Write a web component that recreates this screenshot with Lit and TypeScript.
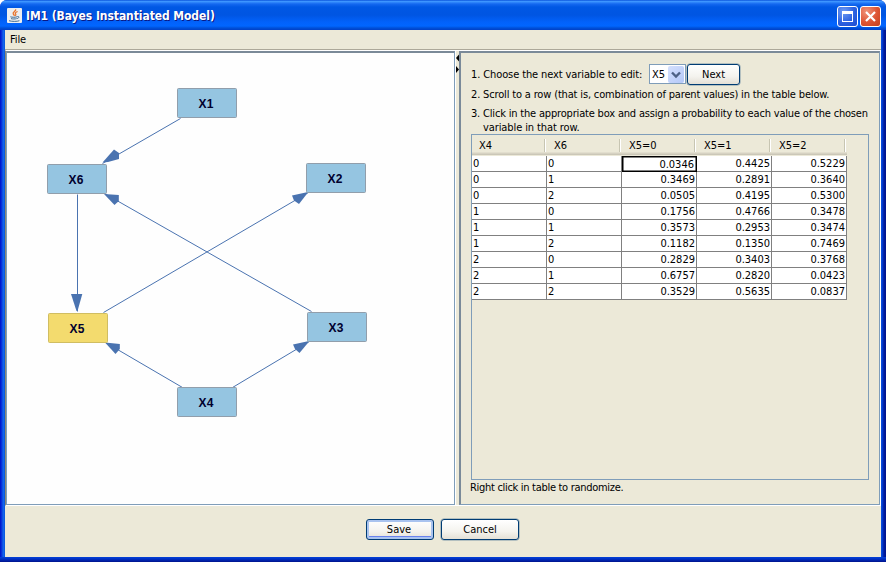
import { LitElement, html, svg, css } from "lit";
import { customElement } from "lit/decorators.js";
import { classMap } from "lit/directives/class-map.js";

const NODES = [
  { id: "X1", x: 177, y: 88 },
  { id: "X2", x: 306, y: 163 },
  { id: "X3", x: 307, y: 312 },
  { id: "X4", x: 177, y: 387 },
  { id: "X5", x: 48, y: 313, selected: true },
  { id: "X6", x: 47, y: 164 },
];

// Each edge: line start, line end, and arrow head triangle.
const EDGES = [
  { line: [180, 118, 102, 163], head: "102.5,162.5 114,149.5 119,153 119,159 108,162" },
  { line: [77, 194, 77, 311], head: "71,294 82.3,294 77.5,311 76.5,311" },
  { line: [103, 312, 308, 192], head: "308,192 292,195.5 294,200.5 299,204 306,195" },
  { line: [311, 311, 104, 193], head: "104,194 118.8,195 118.8,201 114.5,205" },
  { line: [182, 387, 105, 342], head: "105,342.5 119.8,344 119.8,349 115.5,354" },
  { line: [232, 387, 309, 341], head: "309,341 293,344.5 295,349 299.5,353 307,344" },
];

const COLUMNS = ["X4", "X6", "X5=0", "X5=1", "X5=2"];
const ROWS = [
  ["0", "0", "0.0346", "0.4425", "0.5229"],
  ["0", "1", "0.3469", "0.2891", "0.3640"],
  ["0", "2", "0.0505", "0.4195", "0.5300"],
  ["1", "0", "0.1756", "0.4766", "0.3478"],
  ["1", "1", "0.3573", "0.2953", "0.3474"],
  ["1", "2", "0.1182", "0.1350", "0.7469"],
  ["2", "0", "0.2829", "0.3403", "0.3768"],
  ["2", "1", "0.6757", "0.2820", "0.0423"],
  ["2", "2", "0.3529", "0.5635", "0.0837"],
];

@customElement("model-graph")
export class ModelGraph extends LitElement {
  static styles = css`
    :host { display: block; width: 447px; height: 451px; }
    svg { display: block; }
    .edge { stroke: #4a73b0; stroke-width: 1; }
    .head { fill: #4a73b0; }
    .node { fill: #95c5e1; stroke: #919eab; }
    .node.selected { fill: #f3db6e; stroke: #d0bd62; }
    .label { font: bold 12px "Liberation Sans", sans-serif; fill: #00002e; text-anchor: middle; }
  `;
  render() {
    return html`<svg width="447" height="451" viewBox="7 53 447 451">
      ${EDGES.map(
        ({ line: [x1, y1, x2, y2], head }) => svg`
          <line class="edge" x1=${x1 + 0.5} y1=${y1 + 0.5} x2=${x2 + 0.5} y2=${y2 + 0.5}></line>
          <polygon class="head" points=${head}></polygon>`
      )}
      ${NODES.map(
        (n) => svg`
          <rect class=${classMap({ node: true, selected: !!n.selected })}
            x=${n.x + 0.5} y=${n.y + 0.5} width="59" height="29" rx="1"></rect>
          <text class="label" x=${n.x + 29} y=${n.y + 20} textLength="15">${n.id}</text>`
      )}
    </svg>`;
  }
}

@customElement("probability-table")
export class ProbabilityTable extends LitElement {
  static styles = css`
    :host { display: block; box-sizing: border-box; width: 398px; height: 346px; border: 1px solid #7f9db9; }
    .head, .row { display: grid; grid-template-columns: repeat(5, 75px); width: 375px; }
    .th { height: 21px; box-sizing: border-box; padding-left: 7px; line-height: 22px; position: relative;
      background: linear-gradient(#ece9d8 0 17px, #e2dece 17px 18px, #d6d2c2 18px 19px, #cbc7b8 19px 20px, #ece9d8 20px); }
    .th::after { content: ""; position: absolute; right: 1px; top: 4px; width: 1px; height: 13px;
      background: #c7c5b2; border-right: 1px solid #fff; }
    .td { box-sizing: border-box; height: 16px; background: #fff; border-right: 1px solid #808080;
      border-bottom: 1px solid #808080; line-height: 15px; padding: 0 1px; }
    .num { text-align: right; }
    .focus { border: 1px solid #000; box-shadow: inset 0 0 0 .5px #000; line-height: 15px; padding-right: 2px; }
  `;
  render() {
    return html`
      <div class="head">${COLUMNS.map((c) => html`<div class="th">${c}</div>`)}</div>
      ${ROWS.map(
        (row, r) => html`<div class="row">
          ${row.map((v, c) => html`<div class=${classMap({ td: true, num: c > 1, focus: r === 0 && c === 2 })}>${v}</div>`)}
        </div>`
      )}`;
  }
}

@customElement("app-root")
export class AppRoot extends LitElement {
  static styles = css`
    :host { display: block; width: 886px; height: 562px; overflow: hidden; background: #fff;
      font: 11px "DejaVu Sans Condensed", "DejaVu Sans", sans-serif; font-stretch: condensed; color: #000; }
    * { box-sizing: border-box; }
    .window { width: 886px; height: 562px; display: flex; flex-direction: column; padding: 0 5px 5px;
      border-radius: 7px 7px 0 0; overflow: hidden;
      background: linear-gradient(transparent 557px, #0441d8 557px, #0030c4 559px, #00138c 562px),
        linear-gradient(90deg, #0019cf 0 1px, #0831d9 1px 2px, #166aee 3px, #0855dd 5px, #0855dd 881px, #0441d8 882px, #001da0 884px, #00138c 886px); }
    .title { height: 30px; margin: 0 -5px; padding: 1px 5px 0 7px; display: flex; align-items: center; flex: none;
      background: linear-gradient(#0a54dc 0, #3d95ff 1.5px, #1468f0 4px, #0058e4 7px, #0055e2 15px, #0262fb 22px, #0166ff 26px, #0050d8 28px, #0040c8 30px); }
    .title-text { margin-left: 4px; color: #fff; font-weight: bold; font-size: 12px; letter-spacing: -.07px;
      text-shadow: 1px 1px 0 #0a1883; white-space: nowrap; flex: 1; }
    .win-btn { width: 21px; height: 21px; border: 1px solid #fff; border-radius: 3px; margin: 1px 0 0 2px; display: block;
      background: radial-gradient(circle at 30% 25%, #6f9cf4, #2c61e0 55%, #1c4cd0); }
    .win-btn.close { background: radial-gradient(circle at 30% 25%, #f0937a, #dd5433 55%, #c4401c); }
    .body { flex: 1; background: #ece9d8; display: flex; flex-direction: column; }
    .menu { height: 20px; border-bottom: 1px solid #aca899; padding-left: 5px; line-height: 19px; flex: none; letter-spacing: -.1px; }
    .split { display: flex; height: 456px; border-top: 1px solid #fff; border-bottom: 1px solid #fff;
      border-left: 1px solid #8a8776; border-right: 1px solid #fff; flex: none; }
    .pane-left { width: 449px; height: 454px; border: 1px solid #7f9db9; border-top: 2px solid #7b8a98; background: #fefefe; }
    .divider { width: 4px; height: 454px; border-left: 1px solid #fff; }
    .divider svg { display: block; }
    .pane-right { width: 421px; height: 454px; border: 1px solid #7f9db9; border-left: 2px solid #7a8a99; border-top: 2px solid #7b8a98; padding: 11px 9px 0 10px; }
    .choose { display: flex; align-items: center; height: 22px; }
    .line { white-space: nowrap; line-height: 14px; }
    .step1 { width: 178px; letter-spacing: -.11px; }
    .step2 { margin-top: 1px; line-height: 16px; letter-spacing: -.16px; }
    .step3 { margin-top: 4px; line-height: 14px; letter-spacing: -.18px; }
    .indent { padding-left: 12px; line-height: 13px; letter-spacing: -.1px; }
    .combo { width: 37px; height: 20px; margin-top: -2px; border: 1px solid #7f9db9; background: #fff; display: flex; align-items: center; padding-left: 2px; justify-content: space-between; }
    .drop { width: 16px; height: 17px; margin-right: 1px; background: linear-gradient(135deg, #d4e0fd, #b4c8f8); border-radius: 2px; }
    .drop svg { display: block; }
    .btn { height: 21px; border: 1px solid #003c74; border-radius: 3px; background: linear-gradient(#fff, #f4f3ee 60%, #e4e0d6);
      display: flex; align-items: center; justify-content: center; line-height: 13px; box-shadow: 0 0 0 .5px #7d97a8; }
    .next { width: 53px; margin: -1px 0 0 1px; }
    .save { width: 68px; padding-right: 2px; box-shadow: inset 0 0 0 2px #a9c3ef, inset 0 -2px 0 1px #6982ee; }
    .cancel { width: 78px; }
    .actions { display: flex; gap: 7px; padding: 13px 0 0 361px; }
    .hint { margin: 1px 0 0 -1px; letter-spacing: -.3px; }
  `;
  render() {
    return html`<div class="window">
      <div class="title">
        <svg width="15" height="15" viewBox="0 0 15 15">
          <rect width="15" height="15" rx="1" fill="#eceef0"></rect>
          <path d="M8.6 1.2c1 1.8-3.2 2.8-2.4 4.6.3.7 1 1 1.2 2M10.6 3.5C8.4 4.4 7.8 5.2 8.7 6.1c.5.7.1 1.2-.5 1.8" fill="none" stroke="#e8742c" stroke-width="1.3"></path>
          <path d="M3.4 8.8c1.4.6 5.4.6 6.6 0M4 10.6c1.4.5 4.4.5 5.6 0M10.3 8.5c2.4-.4 2 1.6-.4 2.1M2 12.7c2.4.9 8.4.9 10.4 0" fill="none" stroke="#406c94" stroke-width="1"></path>
        </svg>
        <span class="title-text">IM1 (Bayes Instantiated Model)</span>
        <span class="win-btn"><svg width="19" height="19"><path d="M4 4h11v11h-11zM5 7v7h9v-7z" fill="#fff" fill-rule="evenodd"></path></svg></span>
        <span class="win-btn close"><svg width="19" height="19"><path d="M5 5L14 14M14 5L5 14" stroke="#fff" stroke-width="2.2"></path></svg></span>
      </div>
      <div class="body">
        <div class="menu">File</div>
        <div class="split">
          <div class="pane-left"><model-graph></model-graph></div>
          <div class="divider"><svg width="3" height="24"><path d="M3 3.5v7L0 7zM0 15v7L3 18.5z"></path></svg></div>
          <div class="pane-right">
            <div class="choose">
              <div class="line step1">1. Choose the next variable to edit:</div>
              <div class="combo"><span>X5</span><span class="drop"><svg width="16" height="17"><path d="M4 6.5L8 10.5L12 6.5" fill="none" stroke="#4d6185" stroke-width="2.4"></path></svg></span></div>
              <div class="btn next">Next</div>
            </div>
            <div class="line step2">2. Scroll to a row (that is, combination of parent values) in the table below.</div>
            <div class="line step3">3. Click in the appropriate box and assign a probability to each value of the chosen</div>
            <div class="line indent">variable in that row.</div>
            <probability-table></probability-table>
            <div class="line hint">Right click in table to randomize.</div>
          </div>
        </div>
        <div class="actions"><div class="btn save">Save</div><div class="btn cancel">Cancel</div></div>
      </div>
    </div>`;
  }
}
